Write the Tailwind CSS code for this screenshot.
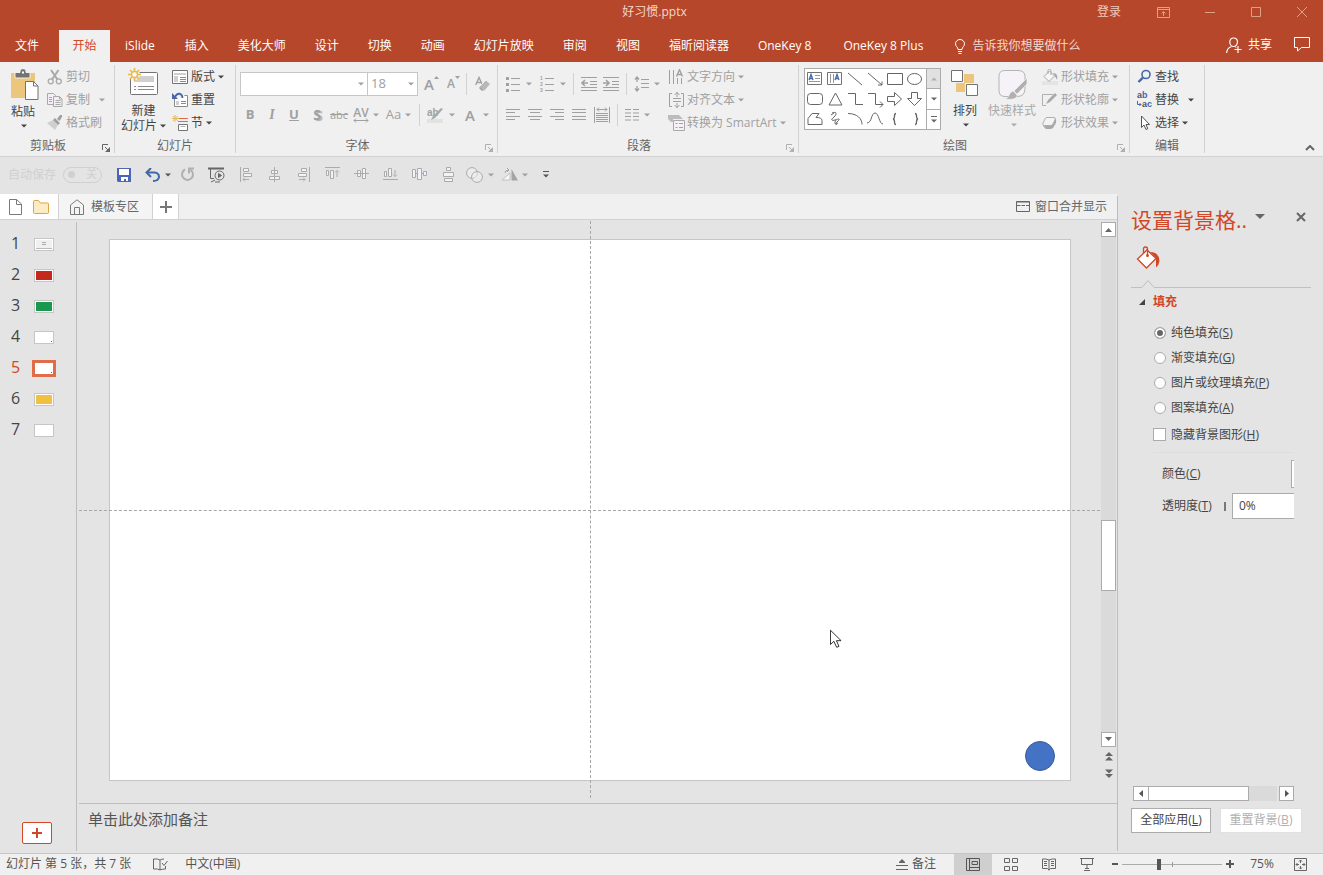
<!DOCTYPE html>
<html lang="zh-CN">
<head>
  <meta charset="UTF-8">
  <meta name="viewport" content="width=device-width, initial-scale=1.0">
  <title>好习惯.pptx</title>
  <script src="https://cdn.jsdelivr.net/npm/@tailwindcss/browser@4"></script>
</head>
<body class="h-screen flex flex-col overflow-hidden bg-[#e4e4e4] text-xs text-[#444] whitespace-nowrap font-['Open_Sans','Noto_Sans_CJK_SC',sans-serif]">

  <!-- shared shapes -->
  <svg class="hidden">
    <symbol id="caret" viewBox="0 0 6 4"><path d="M0 .5h6L3 3.5z" fill="currentColor"/></symbol>
    <symbol id="launcher" viewBox="0 0 8 8"><path d="M.5 6V.5H6M3 3l3 3" fill="none" stroke="currentColor"/><path d="M8 3v5H3z" fill="currentColor"/></symbol>
  </svg>

  <!-- title bar -->
  <header class="bg-[#b7472a] text-white shrink-0">
    <div class="h-[30px] flex pb-[6px] items-center">
      <div class="flex-1"></div>
      <h1 class="mr-[14px] text-[#f3d9d2]">好习惯.pptx</h1>
      <div class="flex-1 flex justify-end items-center text-[#dba283]">
        <a href="#" class="mr-9 text-[#f0c8bc]">登录</a>
        <button class="mr-[35px]" aria-label="功能区显示选项"><svg class="w-[13px] h-[11px]" viewBox="0 0 13 11" fill="none" stroke="currentColor"><path d="M.5.5h12v10H.5zM.5 2.500h12M6.500 9V4.500M4.500 6.500l2-2 2 2"/></svg></button>
        <button class="mr-9" aria-label="最小化"><svg class="w-[10px] h-[11px]" viewBox="0 0 10 11" stroke="currentColor"><path d="M0 5.500h10"/></svg></button>
        <button class="mr-9" aria-label="最大化"><svg class="w-[10px] h-[10px]" viewBox="0 0 10 10" fill="none" stroke="currentColor"><path d="M.5.5h9v9h-9z"/></svg></button>
        <button class="mr-4" aria-label="关闭"><svg class="w-[10px] h-[10px]" viewBox="0 0 10 10" stroke="currentColor"><path d="M0 0l10 10M10 0L0 10"/></svg></button>
      </div>
    </div>
    <nav class="h-8 flex items-stretch">
      <button class="pl-[15px] pr-5">文件</button>
      <button class="px-[13px] w-[51px] bg-[#f0f0f0] text-[#d24726]">开始</button>
      <button class="pl-[15px] pr-[15px]">iSlide</button>
      <button class="pl-[15px] pr-[14px]">插入</button>
      <button class="pl-[15px] pr-[14px]">美化大师</button>
      <button class="pl-[15px] pr-[14px]">设计</button>
      <button class="pl-[15px] pr-[14px]">切换</button>
      <button class="pl-[15px] pr-[14px]">动画</button>
      <button class="pl-[15px] pr-[14px]">幻灯片放映</button>
      <button class="pl-[15px] pr-[14px]">审阅</button>
      <button class="pl-[15px] pr-[14px]">视图</button>
      <button class="pl-[15px] pr-[14px]">福昕阅读器</button>
      <button class="pl-[15px] pr-[17px]">OneKey 8</button>
      <button class="pl-[15px] pr-[17px]">OneKey 8 Plus</button>
      <button class="pl-[15px] flex items-center gap-[7px] text-[#f3d9d2]">
        <svg class="w-[10px] h-[15px]" viewBox="0 0 10 15" fill="none" stroke="#fff"><path d="M3 10.500C3 8 .5 7.500.5 4.800a4.500 4.300 0 0 1 9 0C9.500 7.500 7 8 7 10.500zM3 12.500h4M3.500 14.500h3"/></svg>
        告诉我你想要做什么
      </button>
      <button class="ml-auto flex items-center gap-[6px] pb-[3px]">
        <svg class="w-4 h-4" viewBox="0 0 16 16" fill="none" stroke="#fff" stroke-width="1.200"><path d="M.6 16c.2-3.500 2-5.500 4.600-6.300M7.500 1C5 1 3.800 2.800 3.800 5s1.500 4.500 3.700 4.500S11.500 7.300 11.500 5 10 1 7.500 1zM9.500 10.200l.8.300M12 9v7M8.500 12.500h7"/></svg>
        共享
      </button>
      <button class="ml-[22px] mr-[13px] pb-[3px]" aria-label="批注"><svg class="w-4 h-[15px]" viewBox="0 0 16 15" fill="none" stroke="#fff"><path d="M.5.5h15v10H7.500L3.500 14v-3.500h-3z"/></svg></button>
    </nav>
  </header>

  <!-- ribbon -->
  <section class="bg-[#f0f0f0] border-b border-[#d2d2d2] pt-[3px] pb-[3px] flex shrink-0">

    <!-- clipboard -->
    <div class="w-[115px] border-r border-[#d2d2d2] flex flex-col">
      <div class="h-[73px] flex">
        <button class="ml-[9px] w-[30px] flex flex-col items-center pt-1">
          <svg class="w-[30px] h-[32px]" viewBox="0 0 30 32"><path d="M2 4h24v25H2z" fill="#ebc67c"/><path d="M6 3.500h5V2a2.500 2 0 0 1 6 0v1.500h4V9H6z" fill="#737373" stroke="#f0f0f0"/><path d="M13 2.500h2v2h-2z" fill="#fff"/><path d="M16.500 12.500h8l4.500 4.500v13.500H16.500z" fill="#fff" stroke="#737373"/><path d="M24.500 12.500V17H29" fill="none" stroke="#737373"/></svg>
          <span class="mt-[2px] -ml-[2px] leading-[18px]">粘贴</span>
          <svg class="w-[6px] h-1 mt-[3px]"><use href="#caret"/></svg>
        </button>
        <div class="ml-2 text-[#a0a0a0]">
          <button class="h-[23px] flex items-center gap-[3px]"><svg class="w-4 h-4" viewBox="0 0 16 16" fill="none" stroke="#a9a9a9" stroke-width="1.300"><path d="M4 1l6.500 9.500M11.500 1L5 10.500" stroke-width="2"/><circle cx="3.700" cy="12.300" r="2.500"/><circle cx="11.800" cy="12.300" r="2.500"/></svg>剪切</button>
          <button class="h-[23px] flex items-center gap-[3px]"><svg class="w-4 h-4" viewBox="0 0 16 16" fill="#f3eef5" stroke="#a9a9a9"><path d="M.5 1.500h6l2 2v9h-8zM2 5.500h3M2 7.500h3M2 9.500h3"/><path d="M6.500 4.500h6l2.500 2.500v7.500H6.500zM12.500 4.500V7H15M8.500 8.500h5M8.500 10.500h5M8.500 12.500h5"/></svg>复制<svg class="w-[6px] h-1 ml-[6px]"><use href="#caret"/></svg></button>
          <button class="h-[23px] flex items-center gap-[3px]"><svg class="w-4 h-4" viewBox="0 0 16 16"><path d="M0 8l6-3 5 5-3 5z" fill="#cfcfcf"/><path d="M6 5l2-2 5 5-2 2zM10 4l3-4h2v2l-2.500 4z" fill="#a0a0a0"/></svg>格式刷</button>
        </div>
      </div>
      <div class="h-[15px] flex items-center text-[#666]"><span class="flex-1 text-center leading-[15px]">剪贴板</span><button class="w-[18px] pt-1 pl-[6px]" aria-label="剪贴板设置"><svg class="w-2 h-2"><use href="#launcher"/></svg></button></div>
    </div>

    <!-- slides -->
    <div class="w-[121px] border-r border-[#d2d2d2] flex flex-col">
      <div class="h-[73px] flex">
        <button class="ml-1 w-[49px] flex flex-col items-center pt-[3px]">
          <svg class="w-[31px] h-[30px]" viewBox="0 0 31 30"><rect x="2.500" y="4.500" width="27" height="22" rx="1" fill="#fff" stroke="#737373"/><path d="M6 8h20v6H6z" fill="#d0d0d0"/><path d="M6 18.500h2M10 18.500h16M6 21.500h2M10 21.500h16" stroke="#8a8a8a"/><circle cx="6.500" cy="6.500" r="5.500" fill="#f0f0f0"/><circle cx="6.500" cy="6.500" r="3" fill="#fff" stroke="#ebb950" stroke-width="1.500"/><path d="M6.500 0v3M6.500 10v3M0 6.500h3M10 6.500h3M2 2l2 2M9 9l2 2M11 2L9 4M4 9l-2 2" stroke="#ebb950" stroke-width="1.700"/></svg>
          <span class="mt-[5px] leading-[15px]">新建</span>
          <span class="leading-[15px] flex items-center gap-[3px]">幻灯片<svg class="w-[6px] h-1"><use href="#caret"/></svg></span>
        </button>
        <div class="ml-1">
          <button class="h-[23px] flex items-center gap-[3px]"><svg class="w-4 h-[14px]" viewBox="0 0 16 14"><path d="M.5.5h15v13H.5z" fill="#fff" stroke="#737373"/><path d="M2 3h12v2H2zM2 6h4v6H2z" fill="#d0d0d0"/><path d="M8 7.500h6M8 9.500h6M8 11.500h6" stroke="#8a8a8a"/></svg>版式<svg class="w-[6px] h-1"><use href="#caret"/></svg></button>
          <button class="h-[23px] flex items-center gap-[3px]"><svg class="w-4 h-[15px]" viewBox="0 0 16 15"><path d="M2.500 3.500h13v11h-13z" fill="#fff" stroke="#8a8a8a"/><path d="M4 9h3v4H4z" fill="#d0d0d0"/><path d="M9 9.500h5M9 11.500h5" stroke="#8a8a8a"/><path d="M3 5.500C5 1 10 1 10.500 6" fill="none" stroke="#f0f0f0" stroke-width="5"/><path d="M3 5C5 .5 10 .5 10.500 6" fill="none" stroke="#4668a8" stroke-width="1.800"/><path d="M0 1v6h6z" fill="#4668a8"/></svg>重置</button>
          <button class="h-[23px] flex items-center gap-[3px]"><svg class="w-4 h-4" viewBox="0 0 16 16"><path d="M6 3.500h10M6 6.500h10" stroke="#dc6c50"/><path d="M6.500 9.500h9v6h-9z" fill="#fff" stroke="#737373"/><path d="M8.500 11.500h5" stroke="#b0b0b0"/><path d="M3 0v7M0 3.500h7M.8 1l5 5M5.800 1l-5 5" stroke="#ebb950"/></svg>节<svg class="w-[6px] h-1"><use href="#caret"/></svg></button>
        </div>
      </div>
      <div class="text-center leading-[15px] text-[#666]">幻灯片</div>
    </div>

    <!-- font -->
    <div class="w-[262px] border-r border-[#d2d2d2] flex flex-col">
      <div class="h-[73px] pt-[7px] text-[#a0a0a0]">
        <div class="flex items-center h-6 pl-1">
          <div class="relative"><select aria-label="字体" class="appearance-none block w-[128px] h-6 bg-white border border-[#c6c6c6]"><option></option></select><svg class="w-[6px] h-1 absolute right-[4px] top-[10px] pointer-events-none"><use href="#caret"/></svg></div>
          <div class="relative -ml-px"><select aria-label="字号" class="appearance-none block w-[51px] h-6 pl-[3px] text-[13px] bg-white border border-[#c6c6c6]"><option>18</option></select><svg class="w-[6px] h-1 absolute right-[4px] top-[10px] pointer-events-none"><use href="#caret"/></svg></div>
          <button class="ml-[6px] w-4 flex text-[15px] font-semibold leading-4">A<svg class="w-[5px] h-1"><path d="M0 3h5L2.500 0z" fill="currentColor"/></svg></button>
          <button class="ml-[7px] w-[15px] flex text-xs font-semibold leading-4">A<svg class="w-[5px] h-1"><path d="M0 0h5L2.500 3z" fill="currentColor"/></svg></button>
          <span class="ml-1 w-px h-[22px] bg-[#d2d2d2]"></span>
          <button class="ml-2" aria-label="清除格式"><svg class="w-4 h-4" viewBox="0 0 16 16"><path d="M.7 9L4 1.500l3 6.500M2 6.500h4" fill="none" stroke="#a0a0a0" stroke-width="1.400"/><path d="M4 11l7-7 4.500 4-6 7H7z" fill="#b8b8b8" stroke="#f0f0f0"/><path d="M5 11l3 3-1 1-3-3z" fill="#a0a0a0"/></svg></button>
        </div>
        <div class="flex items-center h-[22px] mt-2 pl-[3px]">
          <button class="w-[22px] text-[13px] font-bold">B</button>
          <button class="w-[22px] text-[14px] italic font-bold font-['Liberation_Serif']">I</button>
          <button class="w-[22px] text-[13px] font-bold underline">U</button>
          <button class="w-[24px] text-[14px] font-bold text-shadow-[2px_1px_1px_#b0b0b0]">S</button>
          <button class="ml-px w-[18px] text-[11px] line-through">abc</button>
          <button class="ml-1 w-[18px] flex flex-col items-center"><span class="text-[12px] font-semibold leading-[11px]">AV</span><svg class="w-4 h-[5px]" viewBox="0 0 16 5" fill="none" stroke="currentColor"><path d="M1 2.500h14M3 .5l-2 2 2 2M13 .5l2 2-2 2"/></svg></button>
          <svg class="w-[6px] h-1 ml-[3px]"><use href="#caret"/></svg>
          <button class="ml-[6px] w-[17px] text-[13px]">Aa</button>
          <svg class="w-[6px] h-1 ml-[3px]"><use href="#caret"/></svg>
          <span class="ml-[8px] w-px h-[22px] bg-[#d2d2d2]"></span>
          <button class="ml-[7px]" aria-label="突出显示"><svg class="w-[17px] h-4 overflow-visible font-['Liberation_Sans']" viewBox="0 0 17 16"><text x="0" y="9" font-size="10" font-weight="700" fill="#a0a0a0">ab</text><path d="M0 12h16v4H0z" fill="#e2e2e2"/><path d="M4 13l2-4 8-8 2 1-8 9z" fill="#a9a9a9"/></svg></button>
          <svg class="w-[6px] h-1 ml-[5px]"><use href="#caret"/></svg>
          <button class="ml-[9px] w-3 text-[15px] font-semibold">A</button>
          <svg class="w-[6px] h-1 ml-[7px]"><use href="#caret"/></svg>
        </div>
      </div>
      <div class="h-[15px] flex items-center text-[#666]"><span class="flex-1 text-center leading-[15px]">字体</span><button class="w-[18px] pt-1 pl-[6px] text-[#b0b0b0]" aria-label="字体设置"><svg class="w-2 h-2"><use href="#launcher"/></svg></button></div>
    </div>

    <!-- paragraph -->
    <div class="w-[301px] border-r border-[#d2d2d2] flex flex-col">
      <div class="h-[73px] flex text-[#a0a0a0]">
        <div class="w-[170px] pt-2 pl-2">
          <div class="flex items-center h-[22px]">
            <button aria-label="项目符号"><svg class="w-4 h-4" viewBox="0 0 16 16" stroke="currentColor"><path d="M5 2.500h9M5 8.500h9M5 14.500h9"/><path d="M0 2.500h3M0 8.500h3M0 14.500h3" stroke-width="3"/></svg></button>
            <svg class="w-[6px] h-1 ml-[4px]"><use href="#caret"/></svg>
            <button class="ml-[7px]" aria-label="编号"><svg class="w-4 h-[18px] overflow-visible font-['Liberation_Sans']" viewBox="0 0 16 18"><path d="M6 3.500h9M6 9.500h9M6 15.500h9" stroke="currentColor"/><g font-size="5" font-weight="700" fill="currentColor"><text x="1" y="5">1</text><text x="1" y="11">2</text><text x="1" y="17">3</text></g></svg></button>
            <svg class="w-[6px] h-1 ml-[5px]"><use href="#caret"/></svg>
            <span class="ml-[7px] w-px h-[22px] bg-[#d2d2d2]"></span>
            <button class="ml-[7px]" aria-label="减少缩进"><svg class="w-4 h-[14px]" viewBox="0 0 16 14" fill="none" stroke="currentColor"><path d="M0 .5h16M9 4.500h7M9 7.500h7M0 10.500h16M0 13.500h16"/><path d="M1 6h6M4 3L1 6l3 3" stroke-width="1.600"/></svg></button>
            <button class="ml-[6px]" aria-label="增加缩进"><svg class="w-4 h-[14px]" viewBox="0 0 16 14" fill="none" stroke="currentColor"><path d="M0 .5h16M9 4.500h7M9 7.500h7M0 10.500h16M0 13.500h16"/><path d="M0 6h6M3 3l3 3-3 3" stroke-width="1.600"/></svg></button>
            <span class="ml-[7px] w-px h-[22px] bg-[#d2d2d2]"></span>
            <button class="ml-[7px]" aria-label="行距"><svg class="w-4 h-4" viewBox="0 0 16 16" fill="none" stroke="currentColor"><path d="M7 3.500h8M7 7.500h8M7 11.500h8"/><path d="M3 1v5M1 3.500L3 1l2 2.500M3 10v5M1 12.500L3 15l2-2.500" stroke-width="1.300"/></svg></button>
            <svg class="w-[6px] h-1 ml-1"><use href="#caret"/></svg>
          </div>
          <div class="flex items-center h-[22px] mt-[9px] gap-2">
            <button aria-label="左对齐"><svg class="w-[14px] h-3" viewBox="0 0 14 12" stroke="currentColor"><path d="M0 .5h14M0 3.500h9M0 7.500h14M0 10.500h9"/></svg></button>
            <button aria-label="居中"><svg class="w-[14px] h-3" viewBox="0 0 14 12" stroke="currentColor"><path d="M0 .5h14M2 3.500h10M0 7.500h14M2 10.500h10"/></svg></button>
            <button aria-label="右对齐"><svg class="w-[14px] h-3" viewBox="0 0 14 12" stroke="currentColor"><path d="M0 .5h14M5 3.500h9M0 7.500h14M5 10.500h9"/></svg></button>
            <button aria-label="两端对齐"><svg class="w-[14px] h-3" viewBox="0 0 14 12" stroke="currentColor"><path d="M0 .5h14M0 3.500h14M0 7.500h14M0 10.500h14"/></svg></button>
            <button aria-label="分散对齐"><svg class="w-4 h-4" viewBox="0 0 16 16" fill="none" stroke="currentColor"><path d="M.5 0v16M15.500 0v16M2 6.500h12M2 8.500h12M2 10.500h12M2 12.500h12M2 14.500h12M3 2.500h10M5 .5l-2 2 2 2M11 .5l2 2-2 2"/></svg></button>
            <span class="-ml-px w-px h-[22px] bg-[#d2d2d2]"></span>
            <button class="-ml-px flex items-center gap-[5px]" aria-label="分栏"><svg class="w-[14px] h-3" viewBox="0 0 14 12" stroke="currentColor"><path d="M0 .5h6M8 .5h6M0 4h6M8 4h6M0 7.500h6M8 7.500h6M0 11h6M8 11h6"/></svg><svg class="w-[6px] h-1"><use href="#caret"/></svg></button>
          </div>
        </div>
        <div>
          <button class="h-[23px] flex items-center gap-[2px]"><svg class="w-[17px] h-4" viewBox="0 0 17 16"><path d="M1.500 1v14M5.500 1v14M9.500 9v6M13.500 9v6" stroke="currentColor"/><path d="M8.500 7.500L11.500.8l3 6.700M9.500 5.500h4" fill="none" stroke="currentColor" stroke-width="1.400"/></svg>文字方向<svg class="w-[6px] h-1 ml-px"><use href="#caret"/></svg></button>
          <button class="h-[23px] flex items-center gap-[2px]"><svg class="w-[17px] h-4" viewBox="0 0 17 16" fill="none" stroke="currentColor"><path d="M4 1.500H1.500v13H4M13 1.500h2.500v13H13M5 6.500h8M5 9.500h8"/><path d="M9 0v5M6.500 3L9 .5 11.500 3M9 11v5M6.500 13L9 15.500l2.500-2.500"/></svg>对齐文本<svg class="w-[6px] h-1 ml-px"><use href="#caret"/></svg></button>
          <button class="h-[23px] flex items-center gap-[2px]"><svg class="w-[17px] h-4" viewBox="0 0 17 16"><path d="M0 0h11l4 4H5v3H3L0 4z" fill="#bcbcbc"/><path d="M5.500 5.500h11v10h-11z" fill="#f6f1f8" stroke="#a9a9a9"/><path d="M7.500 8.500h2M11 8.500h4M7.500 12.500h2M11 12.500h4" stroke="#a0a0a0"/></svg>转换为 SmartArt<svg class="w-[6px] h-1 ml-[2px]"><use href="#caret"/></svg></button>
        </div>
      </div>
      <div class="h-[15px] flex items-center text-[#666]"><span class="flex-1 text-center leading-[15px]">段落</span><button class="w-[18px] pt-1 pl-[6px] text-[#b0b0b0]" aria-label="段落设置"><svg class="w-2 h-2"><use href="#launcher"/></svg></button></div>
    </div>

    <!-- drawing -->
    <div class="w-[331px] border-r border-[#d2d2d2] flex flex-col">
      <div class="h-[73px] flex">
        <div class="ml-[5px] mt-[3px] h-[62px] flex bg-white border border-[#ababab]">
          <svg class="w-[121px] h-[60px]" viewBox="0 0 121 60" fill="none" stroke="#666">
            <path d="M2.500 3.500h14v12h-14z" stroke="#737373"/><path d="M4 11l2-5.500L8 11M5 9.500h2" stroke="#4668a8" stroke-width="1.300"/><path d="M10 6.500h5M10 9.500h5M4 12.500h11" stroke="#999"/>
            <path d="M22.500 3.500h14v12h-14z" stroke="#737373"/><path d="M30 11l2-5.500L34 11M31 9.500h2" stroke="#4668a8" stroke-width="1.300"/><path d="M25.500 5v9M28.500 5v9" stroke="#999"/>
            <path d="M43 4l14 12M63 4l14 12M77 12.500V16h-4"/>
            <path d="M82.500 4.500h15v11h-15z"/><ellipse cx="109.500" cy="10" rx="7" ry="5.500"/>
            <rect x="2.500" y="24.500" width="15" height="11" rx="3"/><path d="M24 36l6.500-12L37 36z"/>
            <path d="M43 24.500h7.500v11H58M63 24.500h7.500v11H78M75 32.500l3 3-3 3"/>
            <path d="M82.500 27.500h7v-4l7 6.500-7 6.500v-4h-7zM106.500 23.500h6v6h4l-7 7-7-7h4z"/>
            <path d="M3 55.500v-6l4-5h7l-3 4q6 0 6 3v4z"/>
            <path d="M27 44c5-2 5 1 2 4-4 3-2 4 1 3s6-2 3 1-3 4 0 2M26 46l3-2M31 51c-2 3-1 5 1 4"/>
            <path d="M43 44.500c9 0 14 5 14 11M62 54c5 0 4-10 8-10s4 11 8 11"/>
            <path d="M91 44.500c-3 0 0 5-3 5.500 3 .5 0 5.500 3 5.500M110 44.500c3 0 0 5 3 5.500-3 .5 0 5.500-3 5.500" stroke-width="1.300"/>
          </svg>
          <div class="w-[14px] border-l border-[#ababab] flex flex-col text-[#666]">
            <button class="flex-1 flex items-center justify-center bg-[#e1e1e1] text-[#b0b0b0]" aria-label="上一行"><svg class="w-[6px] h-1 rotate-180"><use href="#caret"/></svg></button>
            <button class="flex-1 flex items-center justify-center border-y border-[#ababab]" aria-label="下一行"><svg class="w-[6px] h-1"><use href="#caret"/></svg></button>
            <button class="flex-1 flex flex-col items-center justify-center gap-[2px]" aria-label="其他形状"><span class="w-[6px] h-px bg-[#666]"></span><svg class="w-[6px] h-1"><use href="#caret"/></svg></button>
          </div>
        </div>
        <button class="ml-[10px] w-7 flex flex-col items-center pt-1">
          <svg class="w-7 h-7" viewBox="0 0 28 28"><path d="M13 5h10v9H13zM5 14h9v9H5z" fill="#ebc67c"/><path d="M.5 1.500h11v11H.5zM15.500 15.500h11v11h-11z" fill="#fff" stroke="#737373"/></svg>
          <span class="mt-[5px] leading-[18px]">排列</span>
          <svg class="w-[6px] h-1 ml-[2px] mt-[3px]"><use href="#caret"/></svg>
        </button>
        <button class="ml-2 w-[50px] flex flex-col items-center pt-[5px] text-[#a9a9a9]">
          <svg class="w-[30px] h-[30px]" viewBox="0 0 30 30"><path d="M8 .5h13q7 0 7 6v12q0 8-8 8H8q-6 0-6-6V6q0-5.500 6-5.500z" fill="#f5f2f8" stroke="#b4b4b4"/><path d="M30 8v6L20 24l-3-3zM16 21l4 4c0 4-5 5-12 4 5-1 3-6 8-8z" fill="#b0b0b0" stroke="#f0f0f0" stroke-width=".7"/></svg>
          <span class="mt-[2px] leading-[18px]">快速样式</span>
          <svg class="w-[6px] h-1 ml-1 mt-[3px]"><use href="#caret"/></svg>
        </button>
        <div class="ml-[5px] text-[#a0a0a0]">
          <button class="h-[23px] flex items-center gap-[3px]"><svg class="w-4 h-4" viewBox="0 0 16 16"><path d="M0 12h16v4H0z" fill="#e4e4e4"/><path d="M2 7.500L7.500 2l5 5L7 12.500zM6 5V1.500q0-1 1.500-1T9 2v4" fill="#f6f6f6" stroke="#a9a9a9"/><path d="M11 4c4 0 5 3 4 7-1-3-2-3-2-4z" fill="#a9a9a9"/></svg>形状填充<svg class="w-[6px] h-1"><use href="#caret"/></svg></button>
          <button class="h-[23px] flex items-center gap-[3px]"><svg class="w-4 h-4" viewBox="0 0 16 16"><path d="M11 2.500H.5v11H4" fill="none" stroke="#b0b0b0"/><path d="M4 12l2-4 7-7 2 2-7 7z" fill="#a9a9a9"/></svg>形状轮廓<svg class="w-[6px] h-1"><use href="#caret"/></svg></button>
          <button class="h-[23px] flex items-center gap-[3px]"><svg class="w-4 h-4" viewBox="0 0 16 16"><path d="M5 3h8q2 2 1 5l-3 5q-1 1-3 1H4l-3-3z" fill="#a9a9a9"/><path d="M5 2.500h7q2 0 1 2L11 9q-1 1.500-3 1.500H2.500Q0 10.500 1 8l2-4q.7-1.500 2-1.500z" fill="#f3f3f3" stroke="#b0b0b0"/></svg>形状效果<svg class="w-[6px] h-1"><use href="#caret"/></svg></button>
        </div>
      </div>
      <div class="h-[15px] flex items-center text-[#666]"><span class="flex-1 text-center leading-[15px]">绘图</span><button class="w-[18px] pt-1 pl-[6px] text-[#b0b0b0]" aria-label="绘图设置"><svg class="w-2 h-2"><use href="#launcher"/></svg></button></div>
    </div>

    <!-- editing -->
    <div class="w-[75px] border-r border-[#d2d2d2] flex flex-col">
      <div class="h-[73px] pl-[7px]">
        <button class="h-[23px] flex items-center gap-[2px]"><svg class="w-4 h-4" viewBox="0 0 16 16" fill="none" stroke="#4668a8"><circle cx="9" cy="5.500" r="4" stroke-width="1.600"/><path d="M6 8.500L1.500 13" stroke-width="2.400"/></svg>查找</button>
        <button class="h-[23px] flex items-center gap-[2px]"><svg class="w-4 h-4 overflow-visible font-['Liberation_Sans']" viewBox="0 0 16 16" font-size="9" font-weight="700"><text x="0" y="6" fill="#555">a<tspan fill="#4668a8">b</tspan></text><text x="5" y="15" fill="#555">a<tspan fill="#4668a8">c</tspan></text><path d="M.5 9v3.500H4M2.500 11L4 12.500 2.500 14" fill="none" stroke="#4668a8"/></svg>替换<svg class="w-[6px] h-1 ml-[7px]"><use href="#caret"/></svg></button>
        <button class="h-[23px] flex items-center gap-[2px]"><svg class="w-4 h-4" viewBox="0 0 16 16"><path d="M4.500 1v11.500L7 10l2 4.500 1.800-.8L9 9.500h3.500z" fill="#fff" stroke="#555"/></svg>选择<svg class="w-[6px] h-1 ml-px"><use href="#caret"/></svg></button>
      </div>
      <div class="text-center leading-[15px] text-[#666]">编辑</div>
    </div>
    <button class="ml-auto mr-2 self-end pb-[2px]" aria-label="折叠功能区"><svg class="w-[10px] h-[6px]" viewBox="0 0 10 6" fill="none" stroke="#666" stroke-width="2"><path d="M1 5l4-4 4 4"/></svg></button>
  </section>

  <!-- quick access toolbar -->
  <div class="h-[37px] pb-[2px] flex items-center shrink-0 text-[#a0a0a0]">
    <label class="flex items-center gap-[7px] pl-2 text-[#d0d0d0]">自动保存
      <span class="relative w-[39px] h-4 rounded-full border border-[#d0d0d0] flex items-center pl-1 gap-[11px] text-[11px]"><input type="checkbox" class="appearance-none absolute inset-0 w-full h-full"><span class="w-[7px] h-[7px] rounded-full bg-[#d0d0d0]"></span>关</span>
    </label>
    <button class="ml-[15px]" aria-label="保存"><svg class="w-[14px] h-[14px]" viewBox="0 0 14 14"><path d="M0 0h14v14H1l-1-1z" fill="#4a66b4"/><path d="M2 1h10v6H2zM4 9h7v4H9v-2H7v2H4z" fill="#fff"/></svg></button>
    <button class="ml-[14px]" aria-label="撤消"><svg class="w-4 h-[14px]" viewBox="0 0 16 14" fill="none" stroke="#3f68a8" stroke-width="2"><path d="M2 4.500h7.500q4.500.5 4.500 4.500-.5 4-6 4"/><path d="M6 0L1.500 4.500 6 9"/></svg></button>
    <svg class="w-[6px] h-1 ml-1 text-[#555]"><use href="#caret"/></svg>
    <button class="ml-[9px]" aria-label="重复"><svg class="w-[15px] h-[15px]" viewBox="0 0 15 15" fill="none" stroke="#b0b0b0" stroke-width="2"><path d="M5 2.500a5.500 5.500 0 1 0 5.500.3"/><path d="M9 6.500V1.500h5" /></svg></button>
    <button class="ml-[13px]" aria-label="从头开始"><svg class="w-[17px] h-4" viewBox="0 0 17 16" fill="none" stroke="#666"><path d="M0 1.500h16" stroke-width="2"/><path d="M2.500 2v9.500H6M7 13l-4 2M7 15h5"/><circle cx="11.500" cy="8.500" r="4.500" fill="#e4e4e4"/><path d="M10.500 6.500v4l3-2z" fill="#666"/></svg></button>
    <div class="flex ml-[6px]">
      <button class="w-[29px] flex justify-center" aria-label="左对齐"><svg class="w-[14px] h-[15px]" viewBox="0 0 14 15" fill="#f6f1f8" stroke="#ababab"><path d="M1.500 0v15M4.500 1.500h5v3h-5zM4.500 6.500h8v3h-8zM4 12.500h6M6 10.500l-2 2 2 2"/></svg></button>
      <button class="w-[29px] flex justify-center" aria-label="水平居中"><svg class="w-[13px] h-[15px]" viewBox="0 0 13 15" fill="#f6f1f8" stroke="#ababab"><path d="M6.500 0v15M3.500 3.500h6v3h-6zM1.500 9.500h10v3h-10z"/></svg></button>
      <button class="w-[29px] flex justify-center" aria-label="右对齐"><svg class="w-[14px] h-[15px]" viewBox="0 0 14 15" fill="#f6f1f8" stroke="#ababab"><path d="M12.500 0v15M4.500 1.500h5v3h-5zM1.500 6.500h8v3h-8zM2 12.500h6M6 10.500l2 2-2 2"/></svg></button>
      <button class="w-[29px] flex justify-center" aria-label="顶端对齐"><svg class="w-[15px] h-[13px]" viewBox="0 0 15 13" fill="#f6f1f8" stroke="#ababab"><path d="M0 .5h15M1.500 3.500h2v5h-2zM5.500 3.500h3v8h-3zM12 3.500V10M10 5.500l2-2 2 2"/></svg></button>
      <button class="w-[29px] flex justify-center" aria-label="垂直居中"><svg class="w-[15px] h-[13px]" viewBox="0 0 15 13" fill="#f6f1f8" stroke="#ababab"><path d="M0 6.500h15M3.500 3.500h3v6h-3zM8.500 1.500h3v10h-3z"/></svg></button>
      <button class="w-[29px] flex justify-center" aria-label="底端对齐"><svg class="w-[15px] h-[13px]" viewBox="0 0 15 13" fill="#f6f1f8" stroke="#ababab"><path d="M0 12.500h15M1.500 4.500h2v5h-2zM5.500 1.500h3v8h-3zM12 3v6.500M10 7.500l2 2 2-2"/></svg></button>
      <button class="w-[29px] flex justify-center" aria-label="横向分布"><svg class="w-[15px] h-[13px]" viewBox="0 0 15 13" fill="#f6f1f8" stroke="#ababab"><path d="M.5 2.500h3v8h-3zM5.500 1.500h4v11h-4zM11.500 4.500h3v4h-3zM4 6.500h1M10 6.500h1"/></svg></button>
      <button class="w-[29px] flex justify-center" aria-label="纵向分布"><svg class="w-[13px] h-[15px]" viewBox="0 0 13 15" fill="#f6f1f8" stroke="#ababab"><path d="M4.500.5h4v3h-4zM1.500 5.500h10v4h-10zM2.500 11.500h8v3h-8z"/></svg></button>
    </div>
    <button class="ml-[3px]" aria-label="合并形状"><svg class="w-[17px] h-4" viewBox="0 0 17 16" fill="#f6f1f8" fill-opacity=".5" stroke="#ababab"><circle cx="6" cy="6" r="5.400"/><circle cx="11" cy="10" r="5.400"/></svg></button>
    <svg class="w-[6px] h-1 ml-[5px]"><use href="#caret"/></svg>
    <button class="ml-[7px]" aria-label="旋转"><svg class="w-[17px] h-[13px]" viewBox="0 0 17 13"><path d="M1 12l8-7v7z" fill="#f6f6f6" stroke="#c0c0c0"/><path d="M10.500 1v11.500H17z" fill="#a4a4a4"/><path d="M4 5q0-3 4-3M6 0l2 2-2 2" fill="none" stroke="#a4a4a4"/></svg></button>
    <svg class="w-[6px] h-1 ml-1"><use href="#caret"/></svg>
    <button class="ml-[15px] flex flex-col items-center gap-[2px] text-[#555]" aria-label="自定义快速访问工具栏"><span class="w-[6px] h-px bg-[#555]"></span><svg class="w-[6px] h-1"><use href="#caret"/></svg></button>
  </div>

  <div class="flex-1 min-h-0 flex">
    <main class="flex-1 min-w-0 flex flex-col">
      <!-- document tabs -->
      <div class="h-[26px] bg-[#f0f0f0] border-b border-[#d2d2d2] flex items-stretch shrink-0 text-[#666]">
        <div class="w-[59px] bg-white border-r border-[#d2d2d2] flex items-center gap-[11px] pl-[9px]">
          <button aria-label="新建"><svg class="w-[13px] h-4" viewBox="0 0 13 16" fill="none" stroke="#7a7a7a"><path d="M.5.5h7L12.500 5v10.500H.5zM7.500.5V5.500h5"/></svg></button>
          <button aria-label="打开"><svg class="w-4 h-[14px]" viewBox="0 0 16 14"><path d="M1.500.5h4l2 2.500h7q1 0 1 1v8.500q0 1-1 1h-13q-1 0-1-1v-11q0-1 1-1z" fill="#fbecc4" stroke="#dfa545"/></svg></button>
        </div>
        <button class="w-[94px] bg-[#f4f4f4] border-r border-[#d2d2d2] flex items-center gap-[7px] pl-[11px]"><svg class="w-[14px] h-4" viewBox="0 0 14 16" fill="none" stroke="#7a7a7a"><path d="M.5 15.500V6L7 .8 13.500 6v9.500zM4.500 15.500v-7h5v7"/></svg>模板专区</button>
        <button class="w-[26px] bg-white border-r border-[#d2d2d2] flex items-center justify-center" aria-label="新标签"><svg class="w-3 h-3" viewBox="0 0 12 12" stroke="#777" stroke-width="2"><path d="M0 6h12M6 0v12"/></svg></button>
        <button class="ml-auto mr-[10px] flex items-center gap-[5px]"><svg class="w-[14px] h-[11px]" viewBox="0 0 14 11" fill="none" stroke="#666"><path d="M.5.5h13v10H.5zM0 1h14M1 4.500h12" /><path d="M4.500 4.500h1M9 4.500h1" stroke="#f0f0f0"/></svg>窗口合并显示</button>
      </div>

      <div class="flex-1 min-h-0 flex">
        <!-- thumbnails -->
        <aside class="w-[77px] py-[2px] flex">
          <div class="flex-1 flex flex-col border-r border-[#bcbcbc]">
            <ol class="pt-[6px] text-base leading-[31px] text-[#444]">
              <li class="h-[31px] flex items-center pl-[11px]"><span class="w-[23px]">1</span><span class="mt-px w-5 h-[13px] p-px bg-white border border-[#c6c6c6]"><span class="flex flex-col items-center justify-center gap-px h-full border-b border-[#bbb] bg-[#f0f0f0]"><i class="w-1 h-px bg-[#aaa]"></i><i class="w-1 h-px bg-[#aaa]"></i></span></span></li>
              <li class="h-[31px] flex items-center pl-[11px]"><span class="w-[23px]">2</span><span class="mt-px w-5 h-[13px] p-px bg-white border border-[#c6c6c6]"><span class="block h-full bg-[#c5281c]"></span></span></li>
              <li class="h-[31px] flex items-center pl-[11px]"><span class="w-[23px]">3</span><span class="mt-px w-5 h-[13px] p-px bg-white border border-[#c6c6c6]"><span class="block h-full bg-[#1a9850]"></span></span></li>
              <li class="h-[31px] flex items-center pl-[11px]"><span class="w-[23px]">4</span><span class="mt-px w-5 h-[13px] p-px bg-white border border-[#c6c6c6] flex items-end justify-end"><i class="w-px h-px bg-[#4472c4]"></i></span></li>
              <li class="h-[31px] flex items-center pl-[11px] text-[#d24726]"><span class="w-[21px]">5</span><span class="mt-px w-6 h-[17px] p-px bg-white border-3 border-[#e06c4c] flex items-end justify-end"><i class="w-px h-px bg-[#4472c4]"></i></span></li>
              <li class="h-[31px] flex items-center pl-[11px]"><span class="w-[23px]">6</span><span class="mt-px w-5 h-[13px] p-px bg-white border border-[#c6c6c6]"><span class="block h-full bg-[#f0c040]"></span></span></li>
              <li class="h-[31px] flex items-center pl-[11px]"><span class="w-[23px]">7</span><span class="mt-px w-5 h-[13px] bg-white border border-[#c6c6c6]"></span></li>
            </ol>
            <button class="mt-auto mb-[7px] ml-[22px] w-[30px] h-[22px] bg-white border border-[#d24726] rounded-xs flex items-center justify-center" aria-label="新建幻灯片"><svg class="w-[10px] h-[10px]" viewBox="0 0 10 10" stroke="#d24726" stroke-width="2"><path d="M0 5h10M5 0v10"/></svg></button>
          </div>
        </aside>

        <div class="flex-1 min-w-0 flex flex-col">
          <div class="flex-1 min-h-0 flex">
            <!-- slide canvas -->
            <div class="flex-1 pl-8 pr-[30px] pt-[19px] pb-[22px] flex">
              <div class="relative flex-1 bg-white border border-[#c6c6c6]">
                <div class="absolute left-1/2 -top-[19px] -bottom-[18px] border-l border-dashed border-[#a6a6a6]"></div>
                <div class="absolute top-1/2 -left-[31px] -right-[30px] border-t border-dashed border-[#a6a6a6]"></div>
                <div class="absolute right-[15px] bottom-[9px] w-[30px] h-[30px] rounded-full bg-[#4472c4] border border-[#365a9c]"></div>
                <svg class="absolute left-3/4 top-[72%] w-[12px] h-[20px]" viewBox="0 0 13 21"><path d="M.5 1v15.500L4.200 13l3 6.500 2.500-1L7 12.300h5z" fill="#fff" stroke="#222"/></svg>
              </div>
            </div>
            <!-- vertical scrollbar -->
            <div class="w-4 pt-[2px] pr-px pb-[25px] flex flex-col text-[#666]">
              <button class="w-[15px] h-[15px] bg-white border border-[#ababab] flex items-center justify-center" aria-label="向上滚动"><svg class="w-[9px] h-[5px] rotate-180" preserveAspectRatio="none"><path d="M1 0h7L4.500 4z" fill="currentColor"/></svg></button>
              <div class="flex-1 bg-[#dadada] flex flex-col"><div class="grow-[284]"></div><div class="h-[71px] bg-white border border-[#ababab]"></div><div class="grow-[141]"></div></div>
              <button class="w-[15px] h-[15px] bg-white border border-[#ababab] flex items-center justify-center" aria-label="向下滚动"><svg class="w-[9px] h-[5px]"><path d="M1 0h7L4.500 4z" fill="currentColor"/></svg></button>
              <button class="mt-[5px] self-center" aria-label="上一张"><svg class="w-[8px] h-[9px]" viewBox="0 0 8 9" fill="#666"><path d="M0 4l4-4 4 4zM0 8.500l4-4 4 4z"/></svg></button>
              <button class="mt-2 self-center" aria-label="下一张"><svg class="w-[8px] h-[9px] rotate-180" viewBox="0 0 8 9" fill="#666"><path d="M0 4l4-4 4 4zM0 8.500l4-4 4 4z"/></svg></button>
            </div>
          </div>
          <!-- notes -->
          <div class="h-[50px] ml-[2px] border-t border-[#bcbcbc] pl-[9px] pt-1 text-[15px] leading-[22px] text-[#555] shrink-0">单击此处添加备注</div>
        </div>
      </div>
    </main>

    <!-- format background pane -->
    <aside class="w-[206px] flex shrink-0 pt-[2px] pb-[2px]">
      <div class="flex-1 border-l border-[#bcbcbc] flex flex-col pl-[13px] pr-3">
        <div class="flex items-start pt-2">
          <h2 class="text-[21px] leading-8 text-[#d24726]">设置背景格..</h2>
          <button class="ml-auto mt-[10px]" aria-label="窗格选项"><svg class="w-[10px] h-[6px] text-[#666]"><path d="M0 0h10L5 5z" fill="currentColor"/></svg></button>
          <button class="ml-[31px] mr-[5px] mt-2" aria-label="关闭窗格"><svg class="w-[10px] h-[10px]" viewBox="0 0 10 10" stroke="#666" stroke-width="2"><path d="M1 1l8 8M9 1L1 9"/></svg></button>
        </div>
        <button class="ml-[5px] mt-[10px] w-6" aria-label="填充与线条"><svg class="w-6 h-[25px]" viewBox="0 0 24 25"><path d="M1.500 13L11 4l9 8.500-9.500 9.500z" fill="#fff" stroke="#d24726" stroke-width="1.300"/><path d="M7.500 7V3q0-2 2-2t2 2v6" fill="none" stroke="#d24726" stroke-width="1.300"/><circle cx="11.500" cy="9.500" r="1.500" fill="#d24726"/><path d="M14 6q9 0 9.500 9-.5 4-3.500 6.500V12z" fill="#d24726"/></svg></button>
        <div class="mt-2 flex items-end"><span class="w-[10px] h-px bg-[#c0c0c0]"></span><svg class="w-[14px] h-[9px]" viewBox="0 0 14 9" fill="none" stroke="#c0c0c0"><path d="M0 8.500h1l6-7 6 7h1"/></svg><span class="flex-1 h-px bg-[#c0c0c0]"></span></div>
        <button class="mt-[5px] pl-2 flex items-center gap-2 h-[18px] font-bold text-[#d24726]"><svg class="w-[6px] h-[6px]"><path d="M6 0v6H0z" fill="#444"/></svg>填充</button>

        <div class="mt-[9px] pl-[23px] flex flex-col">
          <label class="h-[25px] flex items-center gap-[5px]"><input type="radio" name="fill" checked class="appearance-none w-3 h-3 rounded-full bg-white border border-[#ababab] checked:bg-[#666] checked:shadow-[inset_0_0_0_2px_#fff]"><span>纯色填充(<u>S</u>)</span></label>
          <label class="h-[25px] flex items-center gap-[5px]"><input type="radio" name="fill" class="appearance-none w-3 h-3 rounded-full bg-white border border-[#ababab]"><span>渐变填充(<u>G</u>)</span></label>
          <label class="h-[25px] flex items-center gap-[5px]"><input type="radio" name="fill" class="appearance-none w-3 h-3 rounded-full bg-white border border-[#ababab]"><span>图片或纹理填充(<u>P</u>)</span></label>
          <label class="h-[25px] flex items-center gap-[5px]"><input type="radio" name="fill" class="appearance-none w-3 h-3 rounded-full bg-white border border-[#ababab]"><span>图案填充(<u>A</u>)</span></label>
          <label class="h-[29px] -ml-px flex items-center gap-[5px]"><input type="checkbox" class="appearance-none w-[13px] h-[13px] bg-white border border-[#ababab]"><span>隐藏背景图形(<u>H</u>)</span></label>
        </div>
        <div class="mt-[3px] ml-[22px] mr-[17px] h-px bg-[#dedede]"></div>
        <div class="mt-[7px] h-7 pl-[31px] pr-[17px] flex items-center"><span>颜色(<u>C</u>)</span><button class="ml-auto w-[3px] h-7 bg-white border border-r-0 border-[#ababab]" aria-label="颜色"></button></div>
        <div class="mt-[5px] h-[26px] pl-[31px] pr-[17px] flex items-center"><label for="alpha">透明度(<u>T</u>)</label><span class="ml-auto w-[2px] h-[9px] bg-[#777]"></span><input id="alpha" value="0%" class="ml-[6px] w-[62px] h-[26px] pl-[6px] pb-[2px] bg-white border border-r-0 border-[#ababab]"></div>

        <div class="mt-auto ml-[2px] mr-[17px] h-[15px] flex text-[#555]">
          <button class="w-4 bg-white border border-[#ababab] flex items-center justify-center" aria-label="向左滚动"><svg class="w-1 h-[7px]"><path d="M4 0v7L0 3.500z" fill="currentColor"/></svg></button>
          <div class="w-[101px] -ml-px bg-white border border-[#ababab]"></div>
          <div class="flex-1 bg-[#dadada] mr-[2px]"></div>
          <button class="w-[15px] bg-white border border-[#ababab] flex items-center justify-center" aria-label="向右滚动"><svg class="w-1 h-[7px]"><path d="M0 0v7l4-3.500z" fill="currentColor"/></svg></button>
        </div>
        <div class="mt-[7px] mb-[18px] flex gap-[9px]">
          <button class="w-20 h-[25px] pb-px bg-white border border-[#ababab]">全部应用(<u>L</u>)</button>
          <button class="w-[82px] h-[25px] pb-px bg-white border border-[#e0e0e0] text-[#b0b0b0]" disabled>重置背景(<u>B</u>)</button>
        </div>
      </div>
    </aside>
  </div>

  <!-- status bar -->
  <footer class="h-[22px] pb-px bg-[#f0f0f0] border-t border-[#c6c6c6] flex items-center shrink-0 text-[#555]">
    <span class="pl-[6px]">幻灯片 第 5 张，共 7 张</span>
    <button class="ml-[22px]" aria-label="拼写检查"><svg class="w-[15px] h-[13px]" viewBox="0 0 15 13" fill="none" stroke="#666"><path d="M7 12V2Q5 .5.500 1v10q4.500-.5 6.500 1 1.500-1 5.500-1V8M7 2q1.500-1 4-1M9 5l2 2.500L14.500 3"/></svg></button>
    <button class="ml-[17px]">中文(中国)</button>
    <button class="ml-auto flex items-center gap-1"><svg class="w-3 h-3" viewBox="0 0 12 12"><path d="M0 7.500h12M0 11.500h12M3 4.500h6" stroke="#666"/><path d="M3 4l3-3 3 3z" fill="#666"/></svg>备注</button>
    <button class="ml-[18px] w-[38px] h-[21px] bg-[#cfcfcf] flex items-center justify-center" aria-label="普通视图"><svg class="w-[14px] h-[13px]" viewBox="0 0 14 13" fill="none" stroke="#555"><path d="M.5.5h13v12H.5zM3.500 1v11M6 3.500h5.500v3H6zM4 9.500h9"/></svg></button>
    <button class="w-[38px] flex justify-center" aria-label="幻灯片浏览"><svg class="w-[14px] h-[13px]" viewBox="0 0 14 13" fill="none" stroke="#666"><path d="M.5.5h5v4h-5zM8.500.5h5v4h-5zM.5 8.500h5v4h-5zM8.500 8.500h5v4h-5z"/></svg></button>
    <button class="w-[38px] flex justify-center" aria-label="阅读视图"><svg class="w-[14px] h-[13px]" viewBox="0 0 14 13" fill="none" stroke="#666"><path d="M7 12.500V2Q4 .5.500 1v9.500h5L7 12l1.500-1.500h5V1Q10 .5 7 2M2 3.500h3M2 5.500h3M2 7.500h3M9 3.500h3M9 5.500h3M9 7.500h3"/></svg></button>
    <button class="w-[38px] flex justify-center" aria-label="幻灯片放映"><svg class="w-[14px] h-[13px]" viewBox="0 0 14 13" fill="none" stroke="#666"><path d="M0 .5h14M1.500.5v6h11v-6M7 7v4M4 12.500h6M5 10.500h4"/></svg></button>
    <button class="ml-[6px]" aria-label="缩小"><svg class="w-[6px] h-2"><path d="M0 3h6v2H0z" fill="#555"/></svg></button>
    <div class="relative ml-1 w-[100px] h-4"><input type="range" min="10" max="400" value="75" aria-label="缩放" class="absolute inset-0 w-full opacity-0"><span class="block mt-2 h-px bg-[#aaa]"></span><span class="absolute left-[35px] top-[3px] w-1 h-[11px] bg-[#555]"></span><span class="absolute left-1/2 top-[6px] w-px h-[5px] bg-[#999]"></span></div>
    <button class="ml-1" aria-label="放大"><svg class="w-2 h-2"><path d="M0 3h8v2H0zM3 0h2v8H3z" fill="#555"/></svg></button>
    <button class="ml-[14px] w-7">75%</button>
    <button class="ml-[18px] mr-4" aria-label="适应窗口"><svg class="w-[13px] h-[13px]" viewBox="0 0 13 13" fill="none" stroke="#666"><path d="M.5.5h12v12H.5z"/><path d="M6.500 2v3M6.500 8v3M2 6.500h3M8 6.500h3M5 3.500L6.500 2 8 3.500M5 9.500L6.500 11 8 9.500M3.500 5L2 6.500 3.500 8M9.500 5L11 6.500 9.500 8"/></svg></button>
  </footer>
</body>
</html>
